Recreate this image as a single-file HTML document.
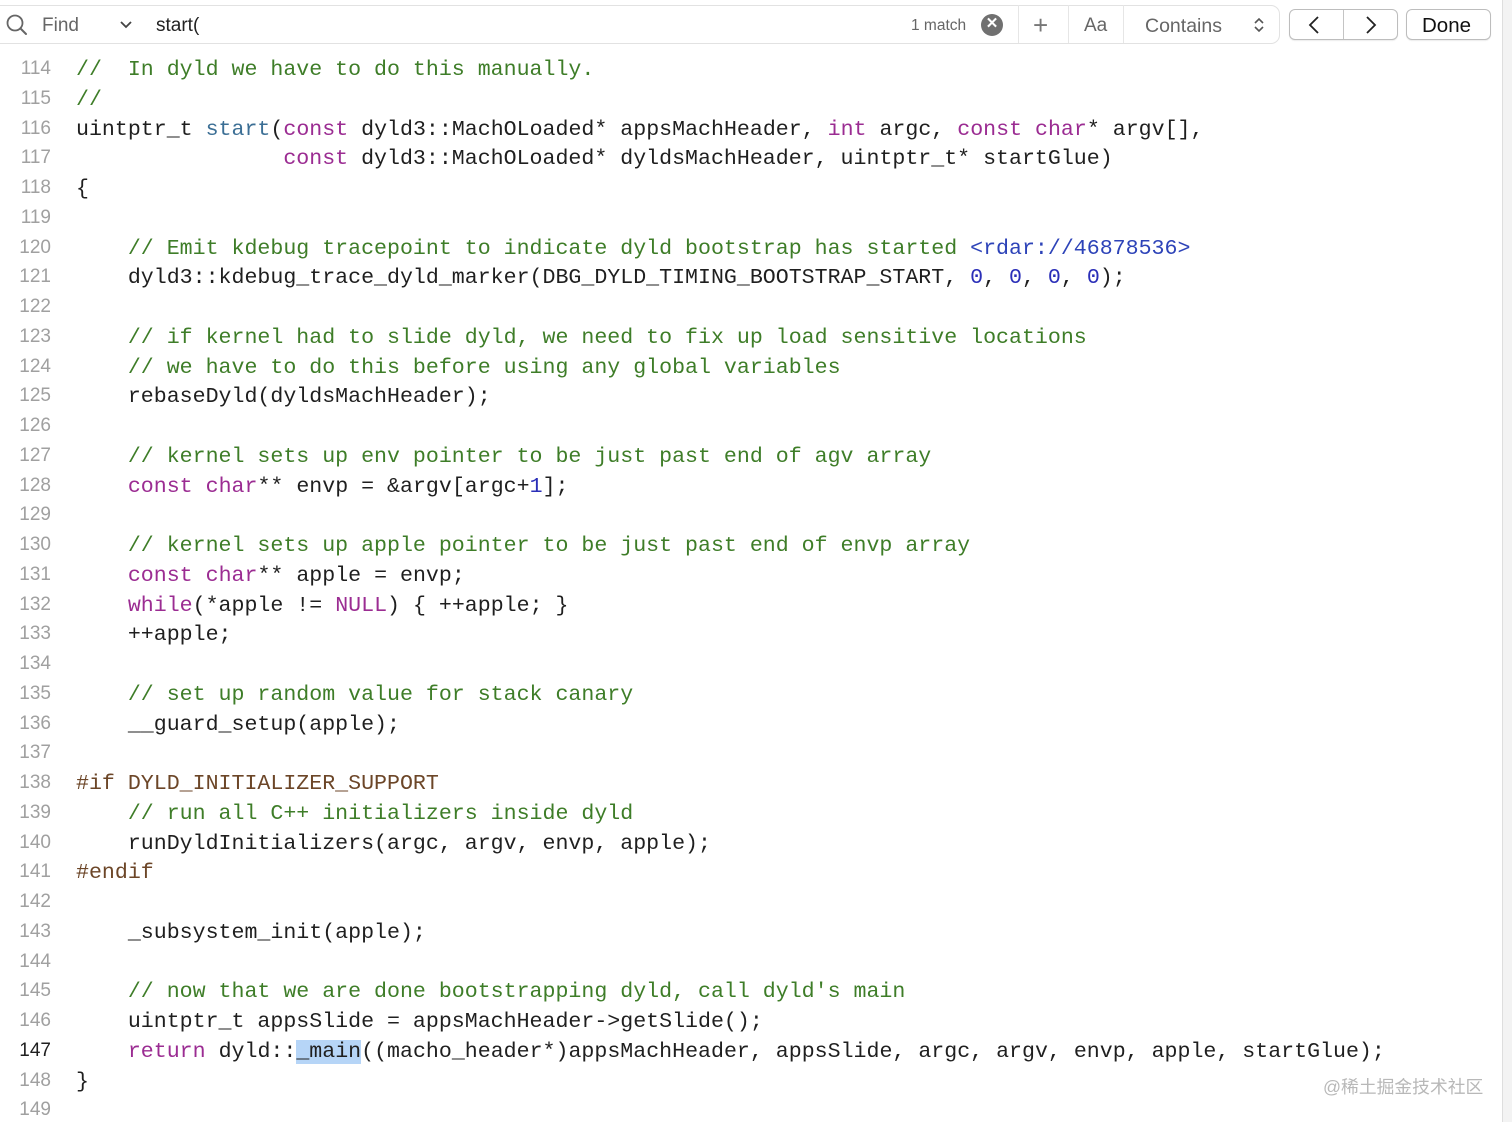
<!DOCTYPE html>
<html><head><meta charset="utf-8"><style>
html,body{margin:0;padding:0;width:1512px;height:1122px;overflow:hidden;background:#fff;position:relative}
.bar{position:absolute;left:0;top:0;width:1502px;height:48px;background:#fff}
.field{position:absolute;left:-10px;top:5px;width:1288px;height:37px;border:1px solid #e2e2e2;border-radius:9px;background:#fff}
.t{position:absolute;font-family:"Liberation Sans",sans-serif}
.sep{position:absolute;top:5px;width:1px;height:38px;background:#e6e6e6}
.btn{position:absolute;top:9px;height:29px;border:1px solid #bdbdbd;border-radius:6px;background:#fff;box-shadow:0 1px 1px rgba(0,0,0,.08)}
.code{position:absolute;left:76px;top:56px;font-family:"Liberation Mono",monospace;font-size:21.6px;line-height:29.75px;white-space:pre;color:#1f1f1f;margin:0}
.nums{position:absolute;left:0;width:51px;top:54px;text-align:right;font-family:"Liberation Sans",sans-serif;font-size:19px;line-height:29.75px;white-space:pre;color:#a0a0a0;margin:0}
.cur{color:#1f1f1f}
.c{color:#3e7d28}.k{color:#9b2c92}.n{color:#2b2fb8}.u{color:#2d43b8}.f{color:#3c6f95}.p{color:#6c4628}
.hl{background:#b6d5f7}
.rs{position:absolute;left:1502px;top:0;width:10px;height:1122px;background:#f3f3f3;border-left:1px solid #dedede}
.wm{position:absolute;left:1323px;top:1073px;font-family:"Liberation Sans","Noto Sans CJK SC",sans-serif;font-size:17.8px;color:#b8b8b8}
</style></head><body>
<div class="bar">
 <div class="field"></div>
 <svg style="position:absolute;left:5px;top:13px" width="24" height="24" viewBox="0 0 24 24"><circle cx="10" cy="10" r="7.5" fill="none" stroke="#666" stroke-width="1.8"/><line x1="15.5" y1="15.5" x2="21" y2="21" stroke="#666" stroke-width="2" stroke-linecap="round"/></svg>
 <div class="t" style="left:42px;top:15px;font-size:19px;color:#666">Find</div>
 <svg style="position:absolute;left:120px;top:21px" width="12" height="8"><path d="M1 1 L6 6 L11 1" fill="none" stroke="#444" stroke-width="1.8"/></svg>
 <div class="t" style="left:156px;top:15px;font-size:19px;color:#222">start(</div>
 <div class="t" style="left:911px;top:17px;font-size:15.5px;color:#666">1 match</div>
 <div style="position:absolute;left:981px;top:14px;width:22px;height:22px;border-radius:50%;background:#707070;color:#fff;text-align:center;line-height:22px;font:bold 15px 'Liberation Sans',sans-serif">✕</div>
 <div class="sep" style="left:1018px"></div>
 <div class="t" style="left:1033px;top:10px;font-size:26px;color:#777;font-weight:300">+</div>
 <div class="sep" style="left:1068px"></div>
 <div class="t" style="left:1084px;top:15px;font-size:19px;color:#666">Aa</div>
 <div class="sep" style="left:1123px"></div>
 <div class="t" style="left:1145px;top:15px;font-size:19.5px;color:#666">Contains</div>
 <svg style="position:absolute;left:1253px;top:17px" width="12" height="16"><path d="M2 6 L6 2 L10 6 M2 10 L6 14 L10 10" fill="none" stroke="#555" stroke-width="1.6"/></svg>
 <div class="btn" style="left:1289px;width:107px"></div>
 <div style="position:absolute;left:1343px;top:10px;width:1px;height:29px;background:#c4c4c4"></div>
 <svg style="position:absolute;left:1306px;top:15px" width="16" height="20"><path d="M12 2 L4 10 L12 18" fill="none" stroke="#222" stroke-width="1.8"/></svg>
 <svg style="position:absolute;left:1363px;top:15px" width="16" height="20"><path d="M4 2 L12 10 L4 18" fill="none" stroke="#222" stroke-width="1.8"/></svg>
 <div class="btn" style="left:1406px;width:83px"></div>
 <div class="t" style="left:1422px;top:14px;font-size:20.5px;color:#111">Done</div>
</div>
<pre class="nums">114
115
116
117
118
119
120
121
122
123
124
125
126
127
128
129
130
131
132
133
134
135
136
137
138
139
140
141
142
143
144
145
146
<span class="cur">147</span>
148
149</pre>
<pre class="code"><span class="c">//  In dyld we have to do this manually.</span>
<span class="c">//</span>
uintptr_t <span class="f">start</span>(<span class="k">const</span> dyld3::MachOLoaded* appsMachHeader, <span class="k">int</span> argc, <span class="k">const</span> <span class="k">char</span>* argv[],
                <span class="k">const</span> dyld3::MachOLoaded* dyldsMachHeader, uintptr_t* startGlue)
{

    <span class="c">// Emit kdebug tracepoint to indicate dyld bootstrap has started </span><span class="u">&lt;rdar://46878536&gt;</span>
    dyld3::kdebug_trace_dyld_marker(DBG_DYLD_TIMING_BOOTSTRAP_START, <span class="n">0</span>, <span class="n">0</span>, <span class="n">0</span>, <span class="n">0</span>);

    <span class="c">// if kernel had to slide dyld, we need to fix up load sensitive locations</span>
    <span class="c">// we have to do this before using any global variables</span>
    rebaseDyld(dyldsMachHeader);

    <span class="c">// kernel sets up env pointer to be just past end of agv array</span>
    <span class="k">const</span> <span class="k">char</span>** envp = &amp;argv[argc+<span class="n">1</span>];

    <span class="c">// kernel sets up apple pointer to be just past end of envp array</span>
    <span class="k">const</span> <span class="k">char</span>** apple = envp;
    <span class="k">while</span>(*apple != <span class="k">NULL</span>) { ++apple; }
    ++apple;

    <span class="c">// set up random value for stack canary</span>
    __guard_setup(apple);

<span class="p">#if DYLD_INITIALIZER_SUPPORT</span>
    <span class="c">// run all C++ initializers inside dyld</span>
    runDyldInitializers(argc, argv, envp, apple);
<span class="p">#endif</span>

    _subsystem_init(apple);

    <span class="c">// now that we are done bootstrapping dyld, call dyld's main</span>
    uintptr_t appsSlide = appsMachHeader-&gt;getSlide();
    <span class="k">return</span> dyld::<span class="hl">_main</span>((macho_header*)appsMachHeader, appsSlide, argc, argv, envp, apple, startGlue);
}
</pre>
<div class="rs"></div>
<div class="wm">@稀土掘金技术社区</div>
</body></html>
